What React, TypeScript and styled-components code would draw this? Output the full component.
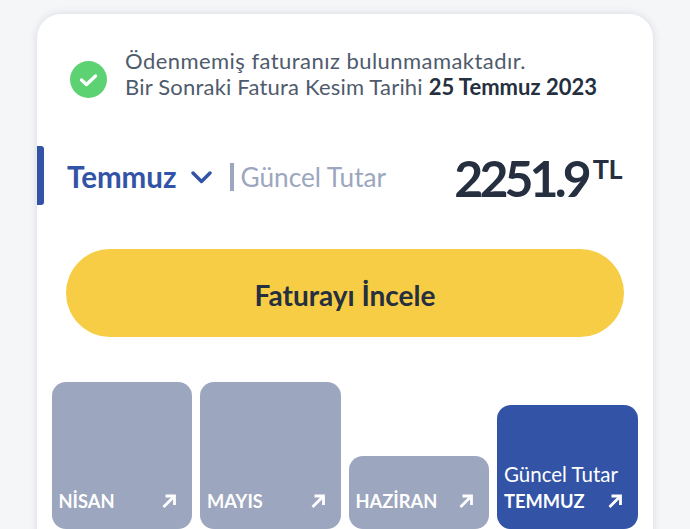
import React from 'react';
import styled, { createGlobalStyle } from 'styled-components';

const GlobalStyle = createGlobalStyle`
  html, body {
    margin: 0;
    height: 100%;
    background: #f5f6f8;
  }
  #root {
    height: 100%;
  }
  * {
    box-sizing: border-box;
  }
`;

const Page = styled.div`
  height: 529px;
  overflow: hidden;
  padding: 14px 37px 0;
  font-family: 'Lato', 'Liberation Sans', sans-serif;
`;

const Card = styled.div`
  width: 616px;
  height: 560px;
  padding: 34px 15px 0;
  background: #fff;
  border-radius: 24px;
  box-shadow: 0 0 8px rgba(40, 50, 80, 0.14);
`;

const Status = styled.div`
  display: flex;
  align-items: center;
  gap: 18px;
  padding-left: 18px;
`;

const StatusIcon = styled.div`
  width: 37px;
  height: 37px;
  margin-top: 10px;
  flex: none;
`;

const StatusText = styled.p`
  margin: 0;
  font-size: 22px;
  line-height: 26px;
  letter-spacing: 0.2px;
  color: #4f5b6c;
  white-space: nowrap;

  span {
    letter-spacing: 0.45px;
  }

  strong {
    font-weight: 700;
    letter-spacing: 0;
    color: #252f40;
  }
`;

const MonthRow = styled.div`
  position: relative;
  display: flex;
  align-items: center;
  height: 59px;
  margin: 46px 0 0 -15px;
  padding: 2px 16px 0 30px;
`;

const Accent = styled.span`
  position: absolute;
  left: 0;
  top: 0;
  width: 7px;
  height: 59px;
  background: #3253a6;
  border-radius: 0 3px 3px 0;
`;

const Month = styled.span`
  font-size: 29.5px;
  font-weight: 700;
  color: #3253a6;
`;

const Chevron = styled.svg`
  width: 21px;
  height: 14px;
  margin-left: 14px;
`;

const Divider = styled.span`
  width: 4px;
  height: 28px;
  margin: 0 7px 0 18px;
  background: #9ca6be;
`;

const Current = styled.span`
  font-size: 26.2px;
  color: #9ca6be;
`;

const Amount = styled.div`
  display: flex;
  align-items: flex-start;
  margin: 2px 0 0 auto;
  color: #252f40;
  font-size: 50px;
  line-height: 56px;
  font-weight: 700;
  letter-spacing: -3.9px;

  sup {
    font-size: 27px;
    line-height: 30px;
    margin: 4px 0 0 5px;
    letter-spacing: -0.5px;
    vertical-align: baseline;
  }
`;

const Action = styled.button`
  display: block;
  width: 558px;
  height: 88px;
  margin: 44px 0 0 14px;
  padding: 3px 0 0;
  border: 0;
  border-radius: 44px;
  background: #f6cd45;
  color: #252f40;
  font-family: inherit;
  font-size: 28px;
  font-weight: 700;
`;

const Bars = styled.div`
  display: flex;
  align-items: flex-end;
  gap: 8px;
  height: 147px;
  margin: 45px 0 0 -0.5px;
`;

const Bar = styled.div<{ $height: number; $active?: boolean }>`
  display: flex;
  flex-direction: column;
  justify-content: flex-end;
  width: 140.5px;
  height: ${(p) => p.$height}px;
  padding: 0 15px 18px 7px;
  border-radius: 14px;
  background: ${(p) => (p.$active ? '#3253a6' : '#9ca6be')};
  color: #fff;
`;

const BarNote = styled.span`
  font-size: 20.5px;
  line-height: 24px;
  margin-bottom: 5px;
  white-space: nowrap;
`;

const BarFooter = styled.div`
  display: flex;
  align-items: center;
  justify-content: space-between;
  font-size: 18.3px;
  line-height: 20px;
  font-weight: 700;
`;

const Arrow = styled.svg`
  width: 16px;
  height: 16px;
`;

const months = [
  { name: 'NİSAN', height: 147 },
  { name: 'MAYIS', height: 147 },
  { name: 'HAZİRAN', height: 73 },
  { name: 'TEMMUZ', height: 124, active: true },
];

const App: React.FunctionComponent = () => {
  return (
    <Page>
      <GlobalStyle />
      <Card>
        <Status>
          <StatusIcon>
            <svg viewBox='0 0 37 37' width='37' height='37'>
              <circle cx='18.5' cy='18.5' r='18.5' fill='#5dd273' />
              <path d='M11.5 19l5 4.5 9-8.5' fill='none' stroke='#fff' strokeWidth='3.4' strokeLinecap='round' strokeLinejoin='round' />
            </svg>
          </StatusIcon>
          <StatusText>
            <span>Ödenmemiş faturanız bulunmamaktadır.</span>
            <br />
            Bir Sonraki Fatura Kesim Tarihi <strong>25 Temmuz 2023</strong>
          </StatusText>
        </Status>

        <MonthRow>
          <Accent />
          <Month>Temmuz</Month>
          <Chevron viewBox='0 0 21 14'>
            <path d='M2 3l8.5 8.5L19 3' fill='none' stroke='#3253a6' strokeWidth='3.4' strokeLinecap='round' strokeLinejoin='round' />
          </Chevron>
          <Divider />
          <Current>Güncel Tutar</Current>
          <Amount>
            2251.9<sup>TL</sup>
          </Amount>
        </MonthRow>

        <Action>Faturayı İncele</Action>

        <Bars>
          {months.map((m) => (
            <Bar key={m.name} $height={m.height} $active={m.active}>
              {m.active && <BarNote>Güncel Tutar</BarNote>}
              <BarFooter>
                {m.name}
                <Arrow viewBox='0 0 16 16'>
                  <path d='M2.5 14L13 3.5M4.5 3h9v9' fill='none' stroke='#fff' strokeWidth='2.8' />
                </Arrow>
              </BarFooter>
            </Bar>
          ))}
        </Bars>
      </Card>
    </Page>
  );
};

export default App;
